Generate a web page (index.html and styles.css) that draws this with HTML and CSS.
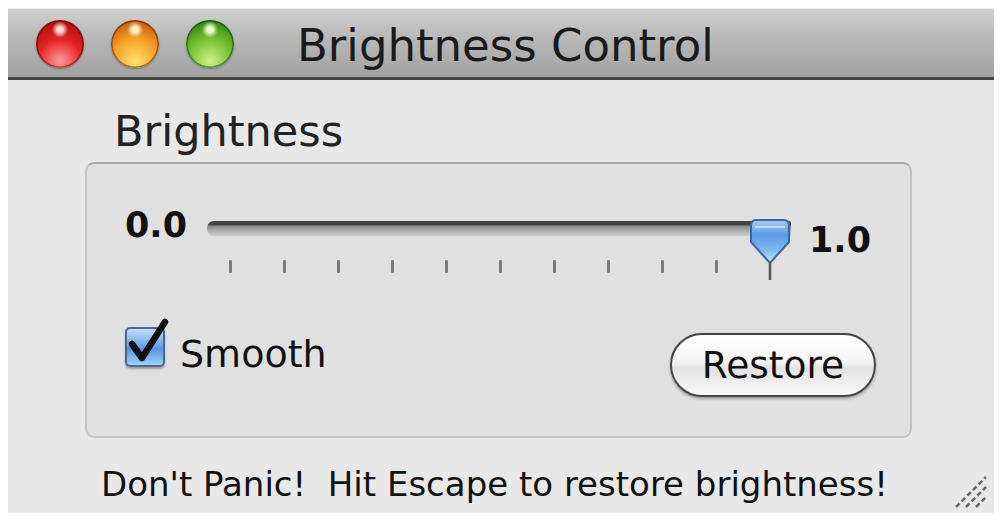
FILE: index.html
```html
<!DOCTYPE html>
<html>
<head>
<meta charset="utf-8">
<link rel="stylesheet" href="styles.css">
</head>
<body>
<div class="window">
  <div class="titlebar">
    <div class="lights">
      <span class="light red"></span>
      <span class="light orange"></span>
      <span class="light green"></span>
    </div>
    <div class="title">Brightness Control</div>
  </div>
  <div class="content">
    <div class="group-label">Brightness</div>
    <div class="group">
      <div class="slider-row">
        <span class="val val-min">0.0</span>
        <div class="slider">
          <div class="track"></div>
          <svg class="knob" width="44" height="64" viewBox="0 0 44 64">
            <defs>
              <linearGradient id="kg" x1="0" y1="0" x2="0" y2="1">
                <stop offset="0" stop-color="#a9cdf5"/>
                <stop offset="0.35" stop-color="#5c9ae6"/>
                <stop offset="0.7" stop-color="#7fb8f0"/>
                <stop offset="1" stop-color="#c8ecff"/>
              </linearGradient>
            </defs>
            <path d="M8 2 H36 Q41 2 41 8 V24 L22 45 L3 24 V8 Q3 2 8 2 Z" fill="url(#kg)" stroke="#3d62a8" stroke-width="2"/>
            <path d="M7 9 H37" stroke="#d6e9fb" stroke-width="2" opacity="0.8"/>
            <path d="M22 45 V62" stroke="#555" stroke-width="2.5"/>
          </svg>
          <div class="ticks">
            <i></i><i></i><i></i><i></i><i></i><i></i><i></i><i></i><i></i><i></i><i class="last"></i>
          </div>
        </div>
        <span class="val val-max">1.0</span>
      </div>
      <div class="controls-row">
        <label class="check">
          <span class="box">
            <svg width="50" height="56" viewBox="0 0 50 56"><path d="M7 29 L17 43 L40 7" fill="none" stroke="#111" stroke-width="6.5" stroke-linecap="round" stroke-linejoin="round"/></svg>
          </span>
          <span class="check-text">Smooth</span>
        </label>
        <button class="restore">Restore</button>
      </div>
    </div>
    <div class="footer">Don't Panic!&nbsp; Hit Escape to restore brightness!</div>
    <svg class="grip" width="40" height="40" viewBox="0 0 40 40">
      <path d="M6 36 L36 6 M16 36 L36 16 M26 36 L36 26" stroke="#666" stroke-width="2.5" stroke-dasharray="5 3"/>
    </svg>
  </div>
</div>
</body>
</html>
```

FILE: styles.css
```css
html, body {
  margin: 0;
  padding: 0;
  background: #ffffff;
}
body {
  font-family: "DejaVu Sans", "Liberation Sans", sans-serif;
  color: #111;
}
.window {
  margin: 8px 6px 0 8px;
  height: 505px;
  display: flex;
  flex-direction: column;
  background: #e8e8e8;
}
.titlebar {
  height: 68px;
  background: linear-gradient(#d0d0d0, #b9b9b9 40%, #a2a2a2);
  border-bottom: 3px solid #454545;
  display: flex;
  align-items: center;
  padding-left: 28px;
  border-top: 1px solid #ececec;
}
.lights {
  display: flex;
  gap: 27px;
  margin-top: 2px;
}
.light {
  width: 48px;
  height: 48px;
  border-radius: 50%;
  box-shadow: 0 1px 2px rgba(0,0,0,0.35), inset 0 0 0 1.5px rgba(60,0,0,0.45);
}
.red {
  background: radial-gradient(circle at 50% 20%, #ffd6d6 0 6%, transparent 18%),
              radial-gradient(circle at 50% 85%, #ff9a9a, #e42424 45%, #a80c0c 90%);
}
.orange {
  background: radial-gradient(circle at 50% 20%, #fff0c8 0 6%, transparent 18%),
              radial-gradient(circle at 50% 85%, #ffe46a, #f59a24 50%, #b9530c 90%);
}
.green {
  background: radial-gradient(circle at 50% 20%, #e6ffd0 0 6%, transparent 18%),
              radial-gradient(circle at 50% 85%, #cdf08a, #6ebd2c 50%, #2f7a10 90%);
  box-shadow: 0 1px 2px rgba(0,0,0,0.35), inset 0 0 0 1.5px rgba(0,50,0,0.5);
}
.title {
  margin-left: 63px;
  font-size: 45px;
  color: #1a1a1a;
  margin-top: 4px;
}
.content {
  flex: 1;
  position: relative;
  padding: 26px 82px 0 77px;
}
.group-label {
  font-size: 43px;
  padding-left: 29px;
  line-height: 50px;
  color: #222;
}
.group {
  margin-top: 6px;
  height: 276px;
  background: #e0e0e0;
  border: 2px solid #c2c2c2;
  border-top-color: #a9a9a9;
  border-radius: 9px;
  box-sizing: border-box;
  padding: 41px 0 0 38px;
}
.slider-row {
  display: flex;
  align-items: flex-start;
}
.val {
  font-weight: bold;
  font-size: 35px;
  line-height: 40px;
}
.val-min {
  width: 82px;
}
.val-max {
  margin-left: 18px;
  margin-top: 15px;
}
.slider {
  position: relative;
  width: 584px;
  height: 96px;
}
.track {
  margin-top: 16px;
  height: 15px;
  border-radius: 7px 2px 2px 7px;
  background: linear-gradient(#434343 0 4px, #8a8a8a 5px, #b0b0b0 10px, #cdcdcd);
}
.knob {
  position: absolute;
  left: 541px;
  top: 13px;
}
.ticks {
  display: flex;
  justify-content: space-between;
  padding: 0 19px 0 22px;
  margin-top: 24px;
}
.ticks i {
  display: block;
  width: 3px;
  height: 13px;
  background: #7a7a7a;
  border-radius: 1px;
}
.ticks i.last {
  visibility: hidden;
}
.controls-row {
  display: flex;
  justify-content: space-between;
  align-items: flex-start;
  padding-right: 34px;
}
.check {
  display: flex;
  align-items: flex-start;
  gap: 15px;
  margin-top: 26px;
}
.box {
  position: relative;
  width: 40px;
  height: 40px;
  border-radius: 5px;
  background: linear-gradient(#c4def8, #6fa6e8 45%, #5a94dc 55%, #9fd0fa);
  border: 2px solid #4b6690;
  box-shadow: 0 2px 2px rgba(0,0,0,0.3);
  box-sizing: border-box;
}
.box svg {
  position: absolute;
  left: -2px;
  top: -14px;
}
.check-text {
  font-size: 38px;
  line-height: 44px;
  margin-top: 5px;
  color: #111;
}
.restore {
  width: 206px;
  height: 64px;
  border-radius: 32px;
  border: 2.5px solid #444;
  background: linear-gradient(#ffffff, #f4f4f4 45%, #e2e2e2 55%, #fafafa);
  box-shadow: 0 2px 3px rgba(0,0,0,0.3);
  font-family: "DejaVu Sans", "Liberation Sans", sans-serif;
  font-size: 37.5px;
  color: #111;
  padding: 0;
  margin-top: 32px;
}
.footer {
  margin-top: 26px;
  margin-left: 16px;
  font-size: 34px;
  color: #111;
  white-space: nowrap;
}
.grip {
  position: absolute;
  right: 4px;
  bottom: 2px;
}
```
